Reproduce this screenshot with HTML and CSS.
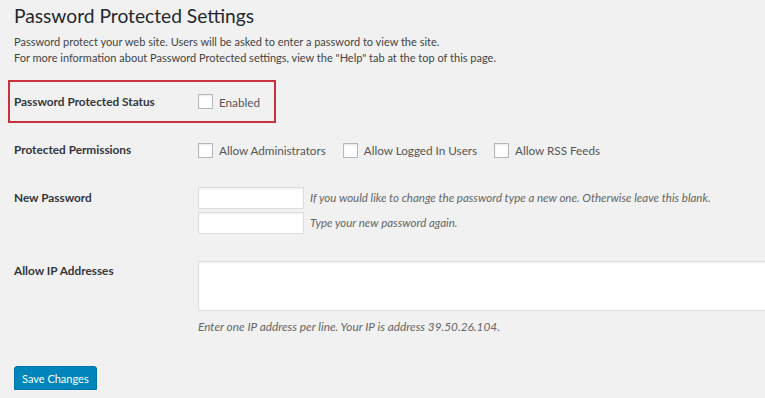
FILE: index.html
```html
<!DOCTYPE html>
<html>
    <head>
        <meta name="viewport" content="width=device-width, initial-scale=1">
        <link rel="stylesheet" href="styles.css">
    </head>
    <body>
        <div class="wrap">
            <h1 class="page-title">Password Protected Settings</h1>
            <p class="intro">Password protect your web site. Users will be asked to enter a password to view the site.<br>
            For more information about Password Protected settings, view the "Help" tab at the top of this page.</p>

            <div class="field-row status-row">
                <div class="highlight">
                    <span class="field-label">Password Protected Status</span>
                    <label class="check"><input type="checkbox"> Enabled</label>
                </div>
            </div>

            <div class="field-row perm-row">
                <span class="field-label">Protected Permissions</span>
                <div class="checks">
                    <label class="check"><input type="checkbox"> Allow Administrators</label>
                    <label class="check"><input type="checkbox"> Allow Logged In Users</label>
                    <label class="check"><input type="checkbox"> Allow RSS Feeds</label>
                </div>
            </div>

            <div class="field-row pass-row">
                <span class="field-label">New Password</span>
                <div class="pass-fields">
                    <div class="pass-line">
                        <input type="password" class="text-input">
                        <span class="hint">If you would like to change the password type a new one. Otherwise leave this blank.</span>
                    </div>
                    <div class="pass-line">
                        <input type="password" class="text-input">
                        <span class="hint">Type your new password again.</span>
                    </div>
                </div>
            </div>

            <div class="field-row ip-row">
                <span class="field-label">Allow IP Addresses</span>
                <div class="wide">
                    <textarea class="ip-box"></textarea>
                    <p class="hint ip-hint">Enter one IP address per line. Your IP is address 39.50.26.104.</p>
                </div>
            </div>

            <button class="save-button">Save Changes</button>
        </div>
    </body>
</html>
```

FILE: styles.css
```css
body {
margin: 0;
background: #f1f1f1;
color: #444;
font-family: "Lato", "Open Sans", sans-serif;
font-size: 12px;
overflow: hidden;
}

.wrap {
padding-left: 14px;
}

.page-title {
font-size: 19.2px;
font-weight: 400;
color: #23282d;
margin: 0;
line-height: 32px;
}

.intro {
margin: 2px 0 0;
line-height: 16px;
font-size: 11px;
}

.field-row {
display: flex;
align-items: flex-start;
}

.field-label {
width: 184px;
flex-shrink: 0;
font-weight: 700;
font-size: 11.8px;
color: #32373c;
line-height: 20px;
}

/* red annotation round the status row */
.highlight {
display: flex;
align-items: center;
box-sizing: border-box;
border: 2px solid #c9323c;
margin-left: -6px;
padding-left: 4px;
width: 268px;
height: 43px;
}

.status-row {
margin-top: 14px;
}

.check {
display: inline-flex;
align-items: center;
gap: 6px;
line-height: 20px;
font-size: 11.7px;
color: #555;
}

.check input {
-webkit-appearance: none;
appearance: none;
width: 15px;
height: 15px;
margin: 0;
background: #fff;
border: 1px solid #b4b9be;
box-shadow: inset 0 1px 2px rgba(0, 0, 0, 0.1);
}

.perm-row {
margin-top: 17px;
}

.checks {
display: flex;
gap: 17px;
}

.pass-row {
margin-top: 27px;
}

.pass-row .field-label {
line-height: 22px;
}

.pass-fields {
display: flex;
flex-direction: column;
gap: 3px;
}

.pass-line {
display: flex;
align-items: center;
gap: 6px;
}

.text-input {
width: 106px;
height: 22px;
box-sizing: border-box;
margin: 0;
background: #fff;
border: 1px solid #ddd;
box-shadow: inset 0 1px 2px rgba(0, 0, 0, 0.07);
}

.hint {
font-style: italic;
color: #666;
font-size: 11.5px;
line-height: 16px;
}

.ip-row {
margin-top: 27px;
}

.wide {
flex: 1;
}

.ip-box {
display: block;
width: calc(100% + 10px);
height: 50px;
box-sizing: border-box;
margin: 0;
background: #fff;
border: 1px solid #ddd;
box-shadow: inset 0 1px 2px rgba(0, 0, 0, 0.07);
resize: none;
}

.ip-hint {
margin: 8px 0 0;
font-size: 11.8px;
}

.save-button {
margin-top: 31px;
background: #0085ba;
border: 1px solid #0073aa;
border-radius: 3px;
box-shadow: 0 1px 0 #006799;
color: #fff;
font-family: inherit;
font-size: 11px;
height: 24px;
padding: 0 7px;
}
```
